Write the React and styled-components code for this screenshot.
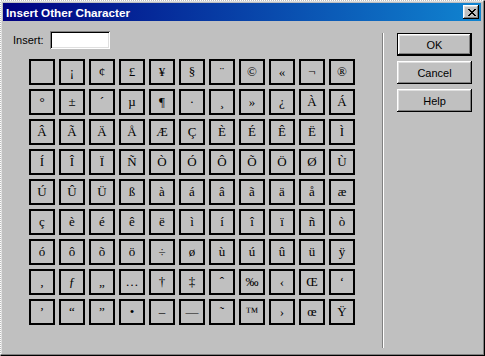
import React from "react"
import styled, { createGlobalStyle } from "styled-components"

const chars = [
    "\u00a0", "¡", "¢", "£", "¥", "§", "¨", "©", "«", "¬", "®",
    "°", "±", "´", "µ", "¶", "·", "¸", "»", "¿", "À", "Á",
    "Â", "Ã", "Ä", "Å", "Æ", "Ç", "È", "É", "Ê", "Ë", "Ì",
    "Í", "Î", "Ï", "Ñ", "Ò", "Ó", "Ô", "Õ", "Ö", "Ø", "Ù",
    "Ú", "Û", "Ü", "ß", "à", "á", "â", "ã", "ä", "å", "æ",
    "ç", "è", "é", "ê", "ë", "ì", "í", "î", "ï", "ñ", "ò",
    "ó", "ô", "õ", "ö", "÷", "ø", "ù", "ú", "û", "ü", "ÿ",
    "‚", "ƒ", "„", "…", "†", "‡", "ˆ", "‰", "‹", "Œ", "‘",
    "’", "“", "”", "•", "–", "—", "˜", "™", "›", "œ", "Ÿ",
]

const GlobalStyle = createGlobalStyle`
    html, body {
        margin: 0;
        padding: 0;
        background: #c0c0c0;
    }
`

export default function App() {
    return (
        <>
            <GlobalStyle />
            <Window>
                <TitleBar>
                    <Title>Insert Other Character</Title>
                    <CloseBtn>
                        <svg width="8" height="7" viewBox="0 0 8 7" shapeRendering="crispEdges">
                            <path
                                d="M0 0h2v1h-2zM6 0h2v1h-2zM1 1h2v1h-2zM5 1h2v1h-2zM2 2h4v1h-4zM3 3h2v1h-2zM2 4h4v1h-4zM1 5h2v1h-2zM5 5h2v1h-2zM0 6h2v1h-2zM6 6h2v1h-2z"
                                fill="#000"
                            />
                        </svg>
                    </CloseBtn>
                </TitleBar>
                <Body>
                    <LeftPane>
                        <InsertRow>
                            <Label>Insert:</Label>
                            <Field />
                        </InsertRow>
                        <Grid>
                            {chars.map((c, i) => (
                                <Cell key={i}>{c}</Cell>
                            ))}
                        </Grid>
                    </LeftPane>
                    <Separator />
                    <RightPane>
                        <Button $default>OK</Button>
                        <Button>Cancel</Button>
                        <Button>Help</Button>
                    </RightPane>
                </Body>
            </Window>
        </>
    )
}

const Window = styled.div`
    width: 485px;
    height: 356px;
    box-sizing: border-box;
    background: #c0c0c0;
    border-top: 1px dotted #ffffff;
    border-left: 1px dotted #ffffff;
    border-right: 1px solid #000;
    border-bottom: 1px solid #000;
    box-shadow: inset -1px -1px #808080, inset 1px 1px #dfdfdf;
    padding: 2px 3px 3px 2px;
    display: flex;
    flex-direction: column;
    font-family: "Liberation Sans", Arial, sans-serif;
`

const TitleBar = styled.div`
    height: 18px;
    flex-shrink: 0;
    display: flex;
    align-items: center;
    justify-content: space-between;
    padding: 0 2px 0 3px;
    background: linear-gradient(to right, #000080, #1084d0);
`

const Title = styled.span`
    color: #fff;
    font-weight: bold;
    font-size: 11.7px;
`

const CloseBtn = styled.div`
    width: 16px;
    height: 14px;
    box-sizing: border-box;
    background: #c0c0c0;
    display: flex;
    align-items: center;
    justify-content: center;
    padding-left: 1px;
    box-shadow: inset -1px -1px #000, inset 1px 1px #fff, inset -2px -2px #808080,
        inset 2px 2px #dfdfdf;
`

const Body = styled.div`
    flex: 1;
    display: flex;
`

const LeftPane = styled.div`
    width: 379px;
    padding: 10px 0 0 10px;
    box-sizing: border-box;
`

const InsertRow = styled.div`
    display: flex;
    align-items: center;
    height: 18px;
`

const Label = styled.span`
    width: 37px;
    font-size: 11px;
    color: #000;
`

const Field = styled.div`
    width: 60px;
    height: 18px;
    box-sizing: border-box;
    background: #fff;
    box-shadow: inset 1px 1px #808080, inset -1px -1px #fff, inset 2px 2px #000,
        inset -2px -2px #dfdfdf;
`

const Grid = styled.div`
    margin: 10px 0 0 16px;
    display: grid;
    grid-template-columns: repeat(11, 26px);
    grid-auto-rows: 26px;
    gap: 4px;
`

const Cell = styled.div`
    box-sizing: border-box;
    border: 2px solid #000;
    display: flex;
    align-items: center;
    justify-content: center;
    font-family: "Liberation Serif", "Times New Roman", serif;
    font-size: 13px;
    color: #000;
`

const Separator = styled.div`
    width: 0;
    height: 315px;
    margin-top: 12px;
    border-left: 1px solid #808080;
    border-right: 1px solid #fff;
`

const RightPane = styled.div`
    padding: 12px 0 0 13px;
    display: flex;
    flex-direction: column;
    gap: 5px;
`

const Button = styled.div`
    width: 75px;
    height: 23px;
    box-sizing: border-box;
    display: flex;
    align-items: center;
    justify-content: center;
    font-size: 11px;
    color: #000;
    background: #c0c0c0;
    border: ${(p) => (p.$default ? "1px solid #000" : "none")};
    box-shadow: inset -1px -1px #000, inset 1px 1px #fff, inset -2px -2px #808080,
        inset 2px 2px #dfdfdf;
`
